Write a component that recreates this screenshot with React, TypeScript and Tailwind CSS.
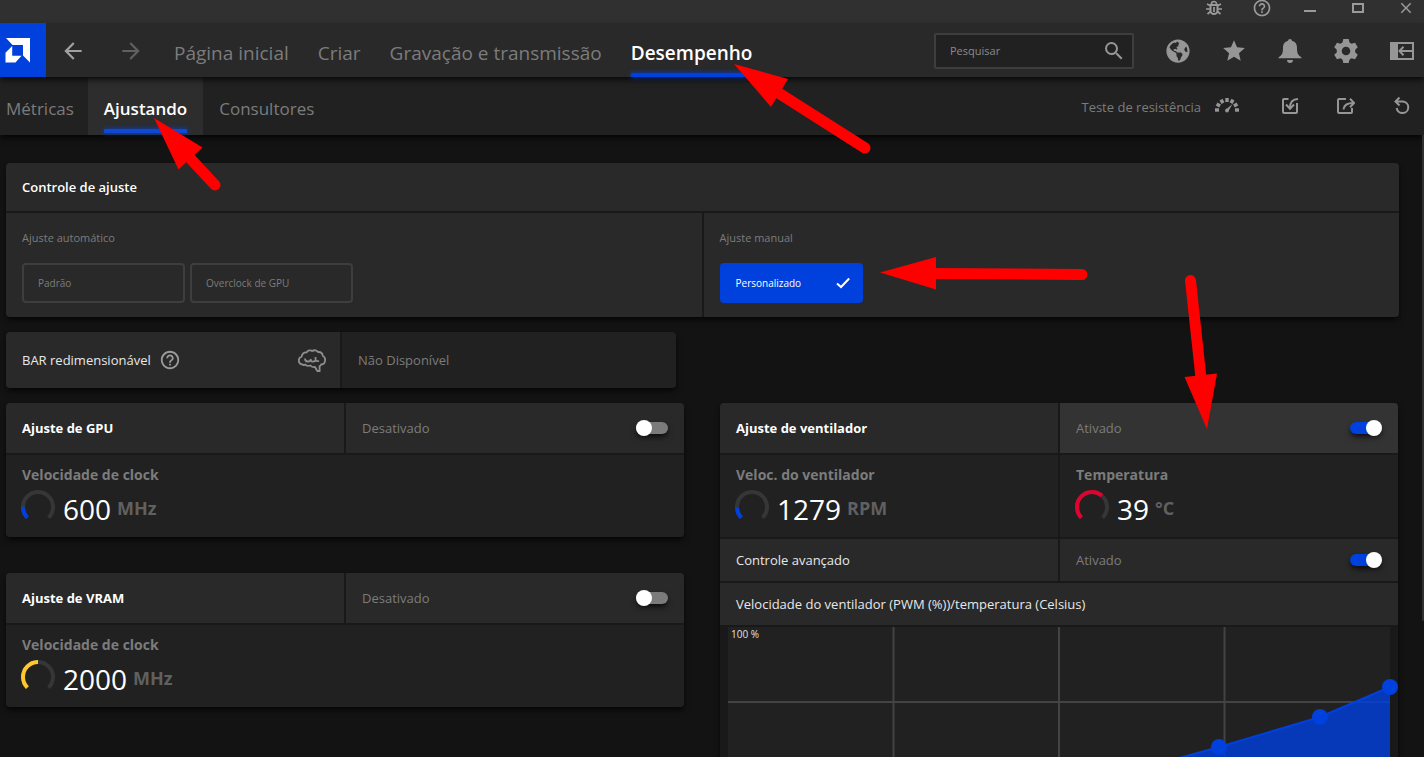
import type { ReactNode } from 'react';
import { FaGlobeAmericas } from 'react-icons/fa';
import { MdArrowBack, MdArrowForward, MdClose, MdHelpOutline, MdSearch, MdStar } from 'react-icons/md';

const mainTabs = ['Página inicial', 'Criar', 'Gravação e transmissão', 'Desempenho'];

const curve = [
  [0, 240],
  [138, 210],
  [275, 180],
  [383, 150],
  [491, 120],
  [592, 90],
  [662, 60],
];

function Logo() {
  return (
    <svg viewBox="0 0 46 54" className="h-full w-full" fill="#fff">
      <path d="M6 15h24v24.500l-7-7v-10.500h-10.500z" />
      <path d="M12.200 23v9.800h9.300l-6 6.700h-10v-9.800z" />
    </svg>
  );
}

function BugIcon() {
  return (
    <svg viewBox="0 0 16 16" className="size-4" fill="none" stroke="currentColor" strokeWidth="2">
      <path d="M4.500 5h7v5.500a3.500 3.500 0 0 1-7 0z" />
      <path d="M5.500 4a2.500 2.500 0 0 1 5 0M4 5.500L1 4M12 5.500L15 4M4 9H0M12 9h4M4.500 11.500L1.500 14M11.500 11.500l3 2.500M8 7v5" strokeWidth="1.700" />
    </svg>
  );
}

function BellIcon() {
  return (
    <svg viewBox="0 0 24 24" className="size-6" fill="currentColor">
      <path d="M12 0c1.200 0 1.800.8 1.900 1.800C17.500 2.600 19 5.300 19 9c0 5.500 1 7 4.500 9.500v.8H.5v-.8C4 16 5 14.500 5 9c0-3.700 1.500-6.400 5.100-7.200C10.200.8 10.800 0 12 0z" />
      <path d="M9 21h6c0 1.800-1.300 3-3 3s-3-1.200-3-3z" />
    </svg>
  );
}

function GearIcon() {
  return (
    <svg viewBox="0 0 24 24" className="size-6" fill="currentColor">
      <circle cx="12" cy="12" r="6.800" fill="none" stroke="currentColor" strokeWidth="5" />
      {[0, 60, 120, 180, 240, 300].map((angle) => (
        <path key={angle} d="M9.300 0h5.400l1 4.500h-7.400z" transform={`rotate(${angle} 12 12)`} />
      ))}
    </svg>
  );
}

function PanelIcon() {
  return (
    <svg viewBox="0 0 24 24" className="size-6" fill="none" stroke="currentColor" strokeWidth="2">
      <path d="M1 4h22v16H1z" />
      <path d="M0 3h8v18H0z" fill="currentColor" stroke="none" />
      <path d="M23 12H9.500M13.500 7.800L9.500 12l4 4.200" />
    </svg>
  );
}

function GaugeIcon() {
  return (
    <svg viewBox="0 0 24 16" className="h-4 w-6" fill="currentColor">
      {[-90, -60, -30, 0, 30, 60, 90].map((angle) => (
        <rect key={angle} x="10.300" y="0" width="3.400" height="4" transform={`rotate(${angle} 12 12)`} />
      ))}
      <circle cx="12" cy="12.500" r="1.900" />
      <path d="M11 11.500L17.500 6l-4 7z" />
    </svg>
  );
}

function ImportIcon() {
  return (
    <svg viewBox="0 0 18 18" className="size-[18px]" fill="none" stroke="currentColor" strokeWidth="2">
      <path d="M7.500 2H3a1 1 0 0 0-1 1v12a1 1 0 0 0 1 1h12a1 1 0 0 0 1-1V6" />
      <path d="M17 2c-4.500 0-8 2.500-8 9M5 7.500l4 4.200 4-4.200" />
    </svg>
  );
}

function ExportIcon() {
  return (
    <svg viewBox="0 0 18 18" className="size-[18px]" fill="none" stroke="currentColor" strokeWidth="2">
      <path d="M9 2H2a1 1 0 0 0-1 1v12a1 1 0 0 0 1 1h12a1 1 0 0 0 1-1v-4" />
      <path d="M6.500 12.500c.3-4 3-6.500 10-6.500M13 1.800l4.200 4.200-4.200 4.200" />
    </svg>
  );
}

function ResetIcon() {
  return (
    <svg viewBox="0 0 18 18" className="size-[18px]" fill="none" stroke="currentColor" strokeWidth="2">
      <path d="M2.500 4.500H10a5.800 5.800 0 1 1-6.300 6.500M6.500.5l-4 4 4 4" />
    </svg>
  );
}

function CheckIcon() {
  return (
    <svg viewBox="0 0 16 16" className="size-4" fill="none" stroke="currentColor" strokeWidth="2">
      <path d="M2 8.500L6 12l8.200-8.500" />
    </svg>
  );
}

function BrainIcon() {
  return (
    <svg viewBox="0 0 28 23" className="h-[23px] w-7 text-[#8e8e8e]" fill="none" stroke="currentColor" strokeWidth="1.800" strokeLinejoin="round">
      <path d="M4.500 15.500C2 15 .8 13.500.8 11.500S2 8 3.700 7.600C3.700 5 6 3.200 8.500 3.500 10 1.300 12.500.8 14.200 2c2-1.300 4.800-.8 5.800 1 2.500-.2 4.500 1.300 4.800 3.800 1.800 1 2.500 2.800 2.300 4.500 0 2.500-1.600 4.200-4 4.200-.5 1.300-1 1.700-1.600 1.700l.2 4.800h-2.400l-2.300-4c-2.500.3-4-.3-4.500-1.500-2.500.7-4.500.3-5-1-1.300.7-2.500.5-3 0z" />
      <path d="M7 9.500c0 2 1 3 2.800 3s3-.8 3-2.500M12.800 11.500c.7 1.500 4 1.500 5-.5M17.500 8v2c0 1.800 1.500 2.800 3.500 1.800" />
    </svg>
  );
}

function Gauge({ value, color }: { value: number; color: string }) {
  const arc = 'M6.400 27.600A15 15 0 1 1 27.600 27.600';
  return (
    <svg viewBox="0 0 34 34" className="size-[34px]" fill="none" strokeWidth="4">
      <path d={arc} stroke="#363636" />
      <path d={arc} stroke={color} pathLength={100} strokeDasharray={`${value} 100`} />
    </svg>
  );
}

function Metric({ label, value, unit, percent, color }: { label: string; value: string; unit: string; percent: number; color: string }) {
  return (
    <div className="h-[82px] bg-[#212121] px-4 pt-2.5">
      <h3 className="text-sm font-bold text-[#7c7c7c]">{label}</h3>
      <div className="-ml-px flex items-center gap-2 pt-1">
        <Gauge value={percent} color={color} />
        <p className="flex items-center gap-1.5 pt-1">
          <span className="text-[28px] leading-8 text-white">{value}</span>
          <span className="pb-0.5 text-[18px] leading-6 font-bold text-[#606060]">{unit}</span>
        </p>
      </div>
    </div>
  );
}

function Toggle({ id, on }: { id: string; on?: boolean }) {
  return (
    <input
      id={id}
      type="checkbox"
      role="switch"
      defaultChecked={on}
      className="flex h-3 w-8 cursor-pointer appearance-none items-center rounded-full bg-[#7b7b7b] shadow-md shadow-black/60 before:block before:size-4 before:shrink-0 before:rounded-full before:bg-white checked:justify-end checked:bg-[#0040dd]"
    />
  );
}

function ToggleCell({ id, on, className }: { id: string; on?: boolean; className: string }) {
  return (
    <div className={`flex items-center justify-between px-4 ${className}`}>
      <label htmlFor={id} className="pt-0.5 text-[13px] text-[#7c7c7c]">
        {on ? 'Ativado' : 'Desativado'}
      </label>
      <Toggle id={id} on={on} />
    </div>
  );
}

function Card({ children, className = '' }: { children: ReactNode; className?: string }) {
  return (
    <section className={`grid gap-0.5 overflow-hidden rounded bg-[#191919] shadow-md shadow-black/60 ${className}`}>
      {children}
    </section>
  );
}

function CardTitle({ children }: { children: ReactNode }) {
  return (
    <h2 className="flex items-center bg-[#292929] px-4 pt-0.5 text-[13px] font-bold text-white">
      {children}
    </h2>
  );
}

function TuningCard({ id, title, value, percent, color }: { id: string; title: string; value: string; percent: number; color: string }) {
  return (
    <Card>
      <div className="grid h-[50px] grid-cols-2 gap-0.5">
        <CardTitle>{title}</CardTitle>
        <ToggleCell id={id} className="bg-[#292929]" />
      </div>
      <Metric label="Velocidade de clock" value={value} unit="MHz" percent={percent} color={color} />
    </Card>
  );
}

function FanChart() {
  const points = curve.map(([x, y]) => `${x},${y}`).join(' ');
  return (
    <svg viewBox="0 0 662 300" className="block w-full overflow-visible">
      <rect width="662" height="300" fill="#212121" />
      <path d="M165.500 0V300M331 0V300M496.500 0V300M0 75H662M0 150H662M0 225H662" stroke="#434343" strokeWidth="2" />
      <text x="3" y="11" fontSize="10" fill="#e0e0e0">100 %</text>
      <polygon points={`0,300 ${points} 662,300`} fill="#0040dd" fillOpacity=".8" />
      <polyline points={points} fill="none" stroke="#0040dd" strokeWidth="2" />
      {curve.map(([x, y]) => (
        <circle key={x} cx={x} cy={y} r="8" fill="#0040dd" />
      ))}
    </svg>
  );
}

// Red marker arrows laid over the window
function Arrows() {
  return (
    <svg width="1424" height="757" className="pointer-events-none absolute top-0 left-0 z-20" fill="#f00" stroke="#f00">
      <g stroke="none">
        <path d="M734 64l54 15-17 28z" />
        <path d="M154 118l48.500 29.500-24 22z" />
        <path d="M880 272.500l56-15.500v32.500z" />
        <path d="M1207 429l-22.500-52 32.500-3.500z" />
      </g>
      <path d="M777 92L865 148M188 156L215 185M930 273.500L1082 274.500M1201 378L1190.500 280.500" strokeWidth="11" strokeLinecap="round" fill="none" />
    </svg>
  );
}

export default function App() {
  return (
    <div className="relative flex h-screen flex-col overflow-hidden bg-[#131313] font-['Open_Sans','Noto_Sans',sans-serif] text-[#7c7c7c]">
      <div className="flex h-[23px] shrink-0 items-center justify-end gap-8 bg-[#303030] pr-2.5 pb-2 text-[#9a9a9a]">
        <button aria-label="Relatar problema"><BugIcon /></button>
        <button aria-label="Ajuda" className="flex w-4 justify-center"><MdHelpOutline className="size-5 shrink-0" /></button>
        <button aria-label="Minimizar" className="flex h-4 w-4 items-end justify-center pb-1"><span className="h-0.5 w-3 bg-current" /></button>
        <button aria-label="Maximizar" className="flex w-4 justify-center"><span className="h-2.5 w-3 border-2 border-current" /></button>
        <button aria-label="Fechar" className="flex w-4 justify-center"><MdClose className="size-[18px] shrink-0" /></button>
      </div>

      <header className="relative z-10 flex h-[54px] shrink-0 items-center bg-[#292929] pr-2.5 shadow-md shadow-black/60">
        <a href="#" aria-label="AMD" className="h-full w-[46px] shrink-0 bg-[#0040dd]"><Logo /></a>
        <div className="flex gap-8 px-3.5 pt-0.5">
          <button aria-label="Voltar" className="text-[#a0a0a0]"><MdArrowBack className="size-[26px]" /></button>
          <button aria-label="Avançar" className="text-[#606060]"><MdArrowForward className="size-[26px]" /></button>
        </div>
        <nav className="ml-4 flex h-full gap-[29px] text-[19px] whitespace-nowrap">
          {mainTabs.map((tab) => (
            <a
              key={tab}
              href="#"
              className={
                tab === 'Desempenho'
                  ? 'relative flex items-center pt-1.5 font-semibold text-white after:absolute after:inset-x-0 after:bottom-0 after:h-1 after:bg-[#0040dd] after:shadow-[0_0_5px_#0040dd]'
                  : 'flex items-center pt-1.5'
              }
            >
              {tab}
            </a>
          ))}
        </nav>
        <div className="ml-auto flex items-center gap-8 pt-0.5 text-[#969696]">
          <label className="flex h-9 w-[200px] items-center rounded-xs border-2 border-[#3e3e3e] bg-[#212121] pr-1.5 pl-3.5">
            <input type="search" aria-label="Pesquisar" placeholder="Pesquisar" className="min-w-0 flex-1 bg-transparent text-[11px] outline-none placeholder:text-[#8a8a8a]" />
            <MdSearch className="size-6" />
          </label>
          <button aria-label="Web"><FaGlobeAmericas className="size-6" /></button>
          <button aria-label="Favoritos" className="flex w-6 justify-center"><MdStar className="size-[26px] shrink-0" /></button>
          <button aria-label="Notificações"><BellIcon /></button>
          <button aria-label="Configurações"><GearIcon /></button>
          <button aria-label="Recolher painel"><PanelIcon /></button>
        </div>
      </header>

      <div className="flex h-[58px] shrink-0 items-center bg-[#212121] pr-[13px] pl-1.5 shadow-md shadow-black/60">
        <nav className="flex h-full text-[17px]">
          <a href="#" className="flex items-center pt-1.5 pr-3.5">Métricas</a>
          <a href="#" className="relative flex items-center bg-[#2d2d2d] px-4 pt-1.5 font-semibold text-white after:absolute after:inset-x-4 after:bottom-0.5 after:h-1 after:bg-[#0f48d5] after:shadow-[0_0_5px_#0040dd]">
            Ajustando
          </a>
          <a href="#" className="flex items-center px-4 pt-1.5">Consultores</a>
        </nav>
        <div className="ml-auto flex items-center gap-[38px] text-[#969696]">
          <button className="mr-1 flex items-center gap-3.5">
            <span className="pt-1 text-[13px] text-[#7c7c7c]">Teste de resistência</span>
            <GaugeIcon />
          </button>
          <button aria-label="Importar perfil"><ImportIcon /></button>
          <button aria-label="Exportar perfil"><ExportIcon /></button>
          <button aria-label="Redefinir"><ResetIcon /></button>
        </div>
      </div>

      <main className="min-h-0 flex-1 overflow-y-auto pt-7 pr-[25px] pl-1.5 [scrollbar-width:none]">
        <Card>
          <h2 className="flex h-12 items-center bg-[#292929] px-4 pt-0.5 text-[13px] font-semibold text-white">Controle de ajuste</h2>
          <div className="grid grid-cols-2 gap-0.5">
            <div className="bg-[#292929] px-4 pt-4 pb-3.5">
              <h3 className="text-[11px] leading-[18px]">Ajuste automático</h3>
              <div className="flex gap-[5px] pt-4 text-[10px]">
                <button className="h-10 w-[163px] rounded-sm border-2 border-[#3e3e3e] px-3.5 text-left">Padrão</button>
                <button className="h-10 w-[163px] rounded-sm border-2 border-[#3e3e3e] px-3.5 text-left">Overclock de GPU</button>
              </div>
            </div>
            <div className="bg-[#292929] px-4 pt-4 pb-3.5">
              <h3 className="text-[11px] leading-[18px]">Ajuste manual</h3>
              <div className="pt-4 text-[10px]">
                <button className="flex h-10 w-[143px] items-center justify-between rounded bg-[#0040dd] pr-3 pl-4 text-white">
                  Personalizado
                  <CheckIcon />
                </button>
              </div>
            </div>
          </div>
        </Card>

        <div className="grid grid-cols-2 gap-x-9 gap-y-[15px] pt-[15px] pr-px">
          <Card className="mr-2 h-14 grid-cols-2">
            <div className="flex items-center gap-2 bg-[#292929] pr-3.5 pl-4">
              <h2 className="pt-0.5 text-[13px] text-[#e8e8e8]">BAR redimensionável</h2>
              <button aria-label="Sobre a BAR redimensionável" className="mr-auto"><MdHelpOutline className="size-[22px] text-[#9a9a9a]" /></button>
              <BrainIcon />
            </div>
            <p className="flex items-center bg-[#212121] px-4 pt-0.5 text-[13px]">Não Disponível</p>
          </Card>

          <div className="col-start-1 space-y-9">
            <TuningCard id="gpu" title="Ajuste de GPU" value="600" percent={17} color="#0040dd" />
            <TuningCard id="vram" title="Ajuste de VRAM" value="2000" percent={50} color="#ffc72c" />
          </div>

          <Card className="text-[13px]">
            <div className="grid h-[50px] grid-cols-2 gap-0.5">
              <CardTitle>Ajuste de ventilador</CardTitle>
              <ToggleCell id="fan" on className="bg-[#333]" />
            </div>
            <div className="grid grid-cols-2 gap-0.5">
              <Metric label="Veloc. do ventilador" value="1279" unit="RPM" percent={16} color="#0040dd" />
              <Metric label="Temperatura" value="39" unit="°C" percent={65} color="#e0032f" />
            </div>
            <div className="grid h-[42px] grid-cols-2 gap-0.5">
              <h3 className="flex items-center bg-[#292929] px-4 pt-0.5 text-[#e8e8e8]">Controle avançado</h3>
              <ToggleCell id="advanced" on className="bg-[#292929]" />
            </div>
            <h3 className="flex h-[42px] items-center bg-[#292929] px-4 pt-0.5 text-[#e8e8e8]">
              Velocidade do ventilador (PWM (%))/temperatura (Celsius)
            </h3>
            <div className="px-2 pb-4">
              <FanChart />
            </div>
          </Card>
        </div>
      </main>

      <div className="absolute top-[135px] right-0 h-[486px] w-0.5 rounded-b bg-[#303030]" />
      <Arrows />
    </div>
  );
}
